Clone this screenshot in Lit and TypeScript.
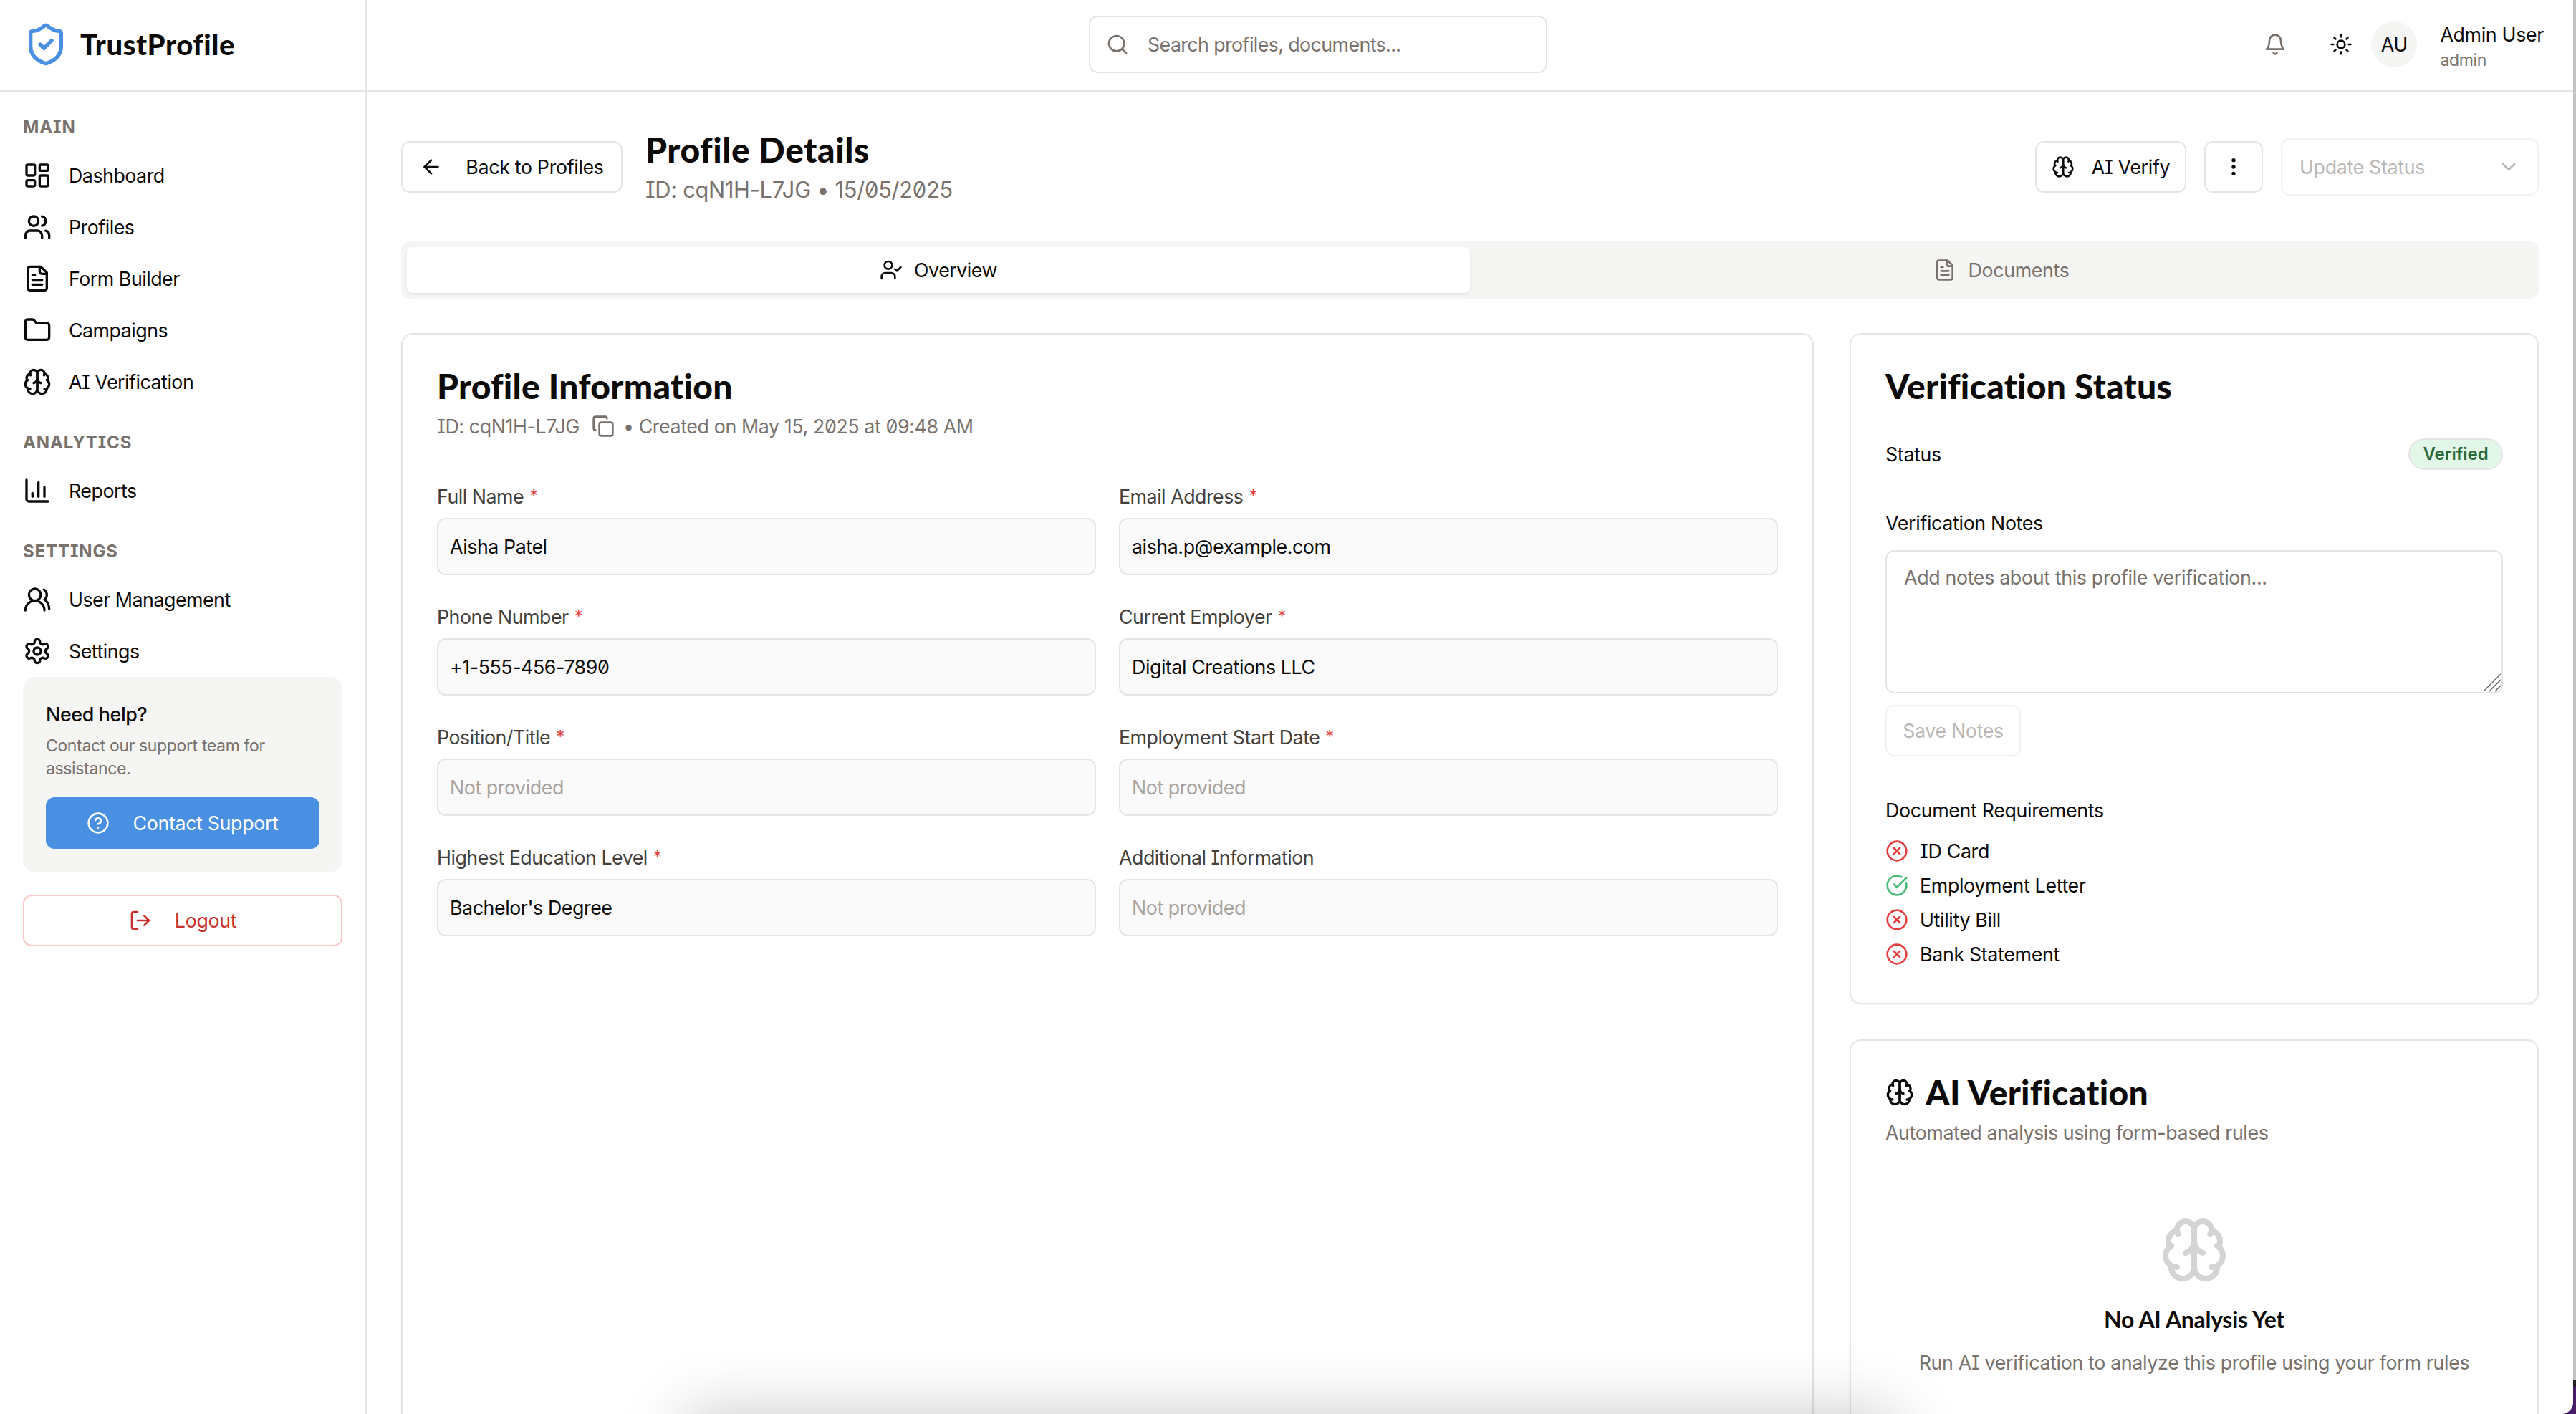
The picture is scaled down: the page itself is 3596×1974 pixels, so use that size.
import { LitElement, html, css, svg, nothing } from "lit";
import { customElement } from "lit/decorators.js";

const P: Record<string, any> = {
  shield: svg`<path d="M20 13c0 5-3.5 7.5-7.66 8.95a1 1 0 0 1-.67-.01C7.5 20.5 4 18 4 13V6a1 1 0 0 1 1-1c2 0 4.5-1.2 6.24-2.72a1.17 1.17 0 0 1 1.52 0C14.51 3.81 17 5 19 5a1 1 0 0 1 1 1z"/><path d="m9 12 2 2 4-4"/>`,
  dash: svg`<rect width="7" height="9" x="3" y="3" rx="1"/><rect width="7" height="5" x="14" y="3" rx="1"/><rect width="7" height="9" x="14" y="12" rx="1"/><rect width="7" height="5" x="3" y="16" rx="1"/>`,
  users: svg`<path d="M16 21v-2a4 4 0 0 0-4-4H6a4 4 0 0 0-4 4v2"/><circle cx="9" cy="7" r="4"/><path d="M22 21v-2a4 4 0 0 0-3-3.87"/><path d="M16 3.13a4 4 0 0 1 0 7.75"/>`,
  file: svg`<path d="M15 2H6a2 2 0 0 0-2 2v16a2 2 0 0 0 2 2h12a2 2 0 0 0 2-2V7Z"/><path d="M14 2v4a2 2 0 0 0 2 2h4"/><path d="M10 9H8"/><path d="M16 13H8"/><path d="M16 17H8"/>`,
  folder: svg`<path d="M20 20a2 2 0 0 0 2-2V8a2 2 0 0 0-2-2h-7.9a2 2 0 0 1-1.69-.9L9.6 3.9A2 2 0 0 0 7.93 3H4a2 2 0 0 0-2 2v13a2 2 0 0 0 2 2Z"/>`,
  brain: svg`<path d="M12 5a3 3 0 1 0-5.997.125 4 4 0 0 0-2.526 5.77 4 4 0 0 0 .556 6.588A4 4 0 1 0 12 18Z"/><path d="M12 5a3 3 0 1 1 5.997.125 4 4 0 0 1 2.526 5.77 4 4 0 0 1-.556 6.588A4 4 0 1 1 12 18Z"/><path d="M15 13a4.5 4.5 0 0 1-3-4 4.5 4.5 0 0 1-3 4"/><path d="M17.599 6.5a3 3 0 0 0 .399-1.375"/><path d="M6.003 5.125A3 3 0 0 0 6.401 6.5"/><path d="M3.477 10.896a4 4 0 0 1 .585-.396"/><path d="M19.938 10.5a4 4 0 0 1 .585.396"/><path d="M6 18a4 4 0 0 1-1.967-.516"/><path d="M19.967 17.484A4 4 0 0 1 18 18"/>`,
  chart: svg`<path d="M3 3v16a2 2 0 0 0 2 2h16"/><path d="M18 17V9"/><path d="M13 17V5"/><path d="M8 17v-3"/>`,
  usersRound: svg`<path d="M18 21a8 8 0 0 0-16 0"/><circle cx="10" cy="8" r="5"/><path d="M22 20c0-3.37-2-6.5-4-8a5 5 0 0 0-.45-8.3"/>`,
  gear: svg`<path d="M12.22 2h-.44a2 2 0 0 0-2 2v.18a2 2 0 0 1-1 1.73l-.43.25a2 2 0 0 1-2 0l-.15-.08a2 2 0 0 0-2.73.73l-.22.38a2 2 0 0 0 .73 2.73l.15.1a2 2 0 0 1 1 1.72v.51a2 2 0 0 1-1 1.74l-.15.09a2 2 0 0 0-.73 2.73l.22.38a2 2 0 0 0 2.73.73l.15-.08a2 2 0 0 1 2 0l.43.25a2 2 0 0 1 1 1.73V20a2 2 0 0 0 2 2h.44a2 2 0 0 0 2-2v-.18a2 2 0 0 1 1-1.73l.43-.25a2 2 0 0 1 2 0l.15.08a2 2 0 0 0 2.73-.73l.22-.39a2 2 0 0 0-.73-2.73l-.15-.08a2 2 0 0 1-1-1.74v-.5a2 2 0 0 1 1-1.74l.15-.09a2 2 0 0 0 .73-2.73l-.22-.38a2 2 0 0 0-2.73-.73l-.15.08a2 2 0 0 1-2 0l-.43-.25a2 2 0 0 1-1-1.73V4a2 2 0 0 0-2-2z"/><circle cx="12" cy="12" r="3"/>`,
  help: svg`<circle cx="12" cy="12" r="10"/><path d="M9.09 9a3 3 0 0 1 5.83 1c0 2-3 3-3 3"/><path d="M12 17h.01"/>`,
  logout: svg`<path d="M9 21H5a2 2 0 0 1-2-2V5a2 2 0 0 1 2-2h4"/><polyline points="16 17 21 12 16 7"/><line x1="21" x2="9" y1="12" y2="12"/>`,
  search: svg`<circle cx="11" cy="11" r="8"/><path d="m21 21-4.3-4.3"/>`,
  bell: svg`<path d="M6 8a6 6 0 0 1 12 0c0 7 3 9 3 9H3s3-2 3-9"/><path d="M10.3 21a1.94 1.94 0 0 0 3.4 0"/>`,
  sun: svg`<circle cx="12" cy="12" r="4"/><path d="M12 2v2"/><path d="M12 20v2"/><path d="m4.93 4.93 1.41 1.41"/><path d="m17.66 17.66 1.41 1.41"/><path d="M2 12h2"/><path d="M20 12h2"/><path d="m6.34 17.66-1.41 1.41"/><path d="m19.07 4.93-1.41 1.41"/>`,
  back: svg`<path d="m12 19-7-7 7-7"/><path d="M19 12H5"/>`,
  more: svg`<circle cx="12" cy="12" r="1"/><circle cx="12" cy="5" r="1"/><circle cx="12" cy="19" r="1"/>`,
  chevron: svg`<path d="m6 9 6 6 6-6"/>`,
  userCheck: svg`<path d="M16 21v-2a4 4 0 0 0-4-4H6a4 4 0 0 0-4 4v2"/><circle cx="9" cy="7" r="4"/><polyline points="16 11 18 13 22 9"/>`,
  copy: svg`<rect width="14" height="14" x="8" y="8" rx="2" ry="2"/><path d="M4 16c-1.1 0-2-.9-2-2V4c0-1.1.9-2 2-2h10c1.1 0 2 .9 2 2"/>`,
  x: svg`<circle cx="12" cy="12" r="10"/><path d="m15 9-6 6"/><path d="m9 9 6 6"/>`,
  ok: svg`<path d="M21.801 10A10 10 0 1 1 17 3.335"/><path d="m9 11 3 3L22 4"/>`,
};

const icon = (name: string, cls = "i16") =>
  html`<svg class="ic ${cls}" viewBox="0 0 24 24" fill="none" stroke="currentColor" stroke-width="2" stroke-linecap="round" stroke-linejoin="round">${P[name]}</svg>`;

const NAV = [
  { title: "MAIN", items: [["dash", "Dashboard"], ["users", "Profiles"], ["file", "Form Builder"], ["folder", "Campaigns"], ["brain", "AI Verification"]] },
  { title: "ANALYTICS", items: [["chart", "Reports"]] },
  { title: "SETTINGS", items: [["usersRound", "User Management"], ["gear", "Settings"]] },
];

const FIELDS = [
  ["Full Name", true, "Aisha Patel"],
  ["Email Address", true, "aisha.p@example.com"],
  ["Phone Number", true, "+1-555-456-7890"],
  ["Current Employer", true, "Digital Creations LLC"],
  ["Position/Title", true, ""],
  ["Employment Start Date", true, ""],
  ["Highest Education Level", true, "Bachelor's Degree"],
  ["Additional Information", false, ""],
] as const;

const DOCS = [
  ["ID Card", false],
  ["Employment Letter", true],
  ["Utility Bill", false],
  ["Bank Statement", false],
] as const;

@customElement("app-root")
export class AppRoot extends LitElement {
  static styles = css`
    :host {
      display: block;
      zoom: 2;
      width: 1798px;
      height: 987px;
      overflow: hidden;
      position: relative;
      background: #c4c4c4;
      font-family: "Inter", "Liberation Sans", sans-serif;
      font-feature-settings: "zero" 1, "cv08" 1;
      font-size: 13.4px;
      letter-spacing: -0.17px;
      line-height: 20px;
      color: #0c0a09;
    }
    * { box-sizing: border-box; }
    .ic { display: block; flex: none; }
    .i16 { width: 16px; height: 16px; }
    .i20 { width: 20px; height: 20px; }
    .i32 { width: 32px; height: 32px; }
    .i48 { width: 48px; height: 48px; stroke-width: 2; }
    .desk {
      position: absolute; right: 0; bottom: 0; width: 10px; height: 23.5px;
      background: #4a1d68; border-top: 4.5px solid #222;
    }
    .shell {
      position: relative; z-index: 1;
      width: 1796px; height: 987px; display: flex;
      background: #fff; border-bottom-right-radius: 8px; overflow: hidden;
    }
    .side { width: 256px; flex: none; border-right: 1px solid #e7e5e4; display: flex; flex-direction: column; }
    .brand {
      height: 64px; flex: none; display: flex; align-items: center; gap: 8px;
      padding: 0 0 1px 16px; border-bottom: 1px solid #e7e5e4;
    }
    .brand .ic { color: #4a90e2; }
    .brand span { font: 900 20px/28px "Lato", sans-serif; letter-spacing: 0.28px; }
    .nav { padding: 16.5px 16px 0; display: flex; flex-direction: column; }
    .sec + .sec { margin-top: 16px; }
    .sec h4 {
      margin: 0 0 7.5px; padding-top: 0.5px; font-size: 12px; line-height: 16px; font-weight: 700;
      color: #78716c; letter-spacing: 0.45px;
    }
    .item { height: 36px; display: flex; align-items: center; gap: 12px; letter-spacing: -0.25px; }
    .help { background: #f5f5f4; border-radius: 8px; padding: 16px; }
    .help b { display: block; font-weight: 500; }
    .help p { margin: 4px 0 12px; font-size: 11.5px; letter-spacing: -0.18px; line-height: 16px; color: #78716c; }
    .btn {
      height: 36px; border-radius: 6px; display: flex; align-items: center; justify-content: center;
      font-weight: 400; white-space: nowrap;
    }
    .primary { background: #4a90e2; color: #fff; gap: 16px; }
    .logout {
      margin-top: 16px; border: 1px solid #f8c9c9; color: #c9302c; gap: 16px; background: #fff;
    }
    .main { flex: 1; min-width: 0; display: flex; flex-direction: column; }
    .top {
      height: 64px; flex: none; display: flex; align-items: center;
      padding: 0 20.5px 1px 504px; border-bottom: 1px solid #e7e5e4;
    }
    .search {
      width: 320px; height: 40px; border: 1px solid #e7e5e4; border-radius: 6px;
      display: flex; align-items: center; gap: 13px; padding-left: 11px; color: #78716c;
      letter-spacing: -0.3px;
    }
    .right { margin-left: auto; display: flex; align-items: center; }
    .tbtn { width: 36px; height: 36px; display: flex; align-items: center; justify-content: center; }
    .bell { color: #78716c; margin-right: 10px; }
    .avatar {
      width: 32px; height: 32px; border-radius: 50%; background: #f5f5f4; margin-left: 3px;
      display: flex; align-items: center; justify-content: center;
    }
    .who { margin-left: 16px; margin-top: 3.5px; }
    .who b { display: block; font-weight: 400; line-height: 18px; }
    .who span { display: block; font-size: 11.5px; line-height: 18px; color: #78716c; }
    .content { padding: 24px 24px 0; flex: 1; min-height: 0; }
    .titlebar { height: 56.5px; display: flex; align-items: center; }
    .out { border: 1px solid #e7e5e4; background: #fff; }
    .backb { width: 154.5px; gap: 16px; margin-right: 16px; }
    .ttl h1 { margin: 0; font: 900 24px/32px "Lato", sans-serif; letter-spacing: 0.3px; }
    .ttl p { margin: 0; font-size: 15.4px; letter-spacing: -0.15px; line-height: 24px; color: #78716c; }
    .actions { margin-left: auto; display: flex; align-items: center; gap: 12.5px; }
    .aib { width: 105.5px; gap: 12px; }
    .kebab { width: 41px; }
    .select {
      width: 180px; height: 40px; border: 1px solid #e7e5e4; border-radius: 6px; opacity: .5;
      display: flex; align-items: center; justify-content: space-between; padding: 0 12px; color: #78716c;
    }
    .tabs {
      margin-top: 24px; height: 40px; background: #f5f5f4; border-radius: 6px; padding: 4px;
      display: grid; grid-template-columns: 1fr 1fr;
    }
    .tab { display: flex; align-items: center; justify-content: center; gap: 8px; border-radius: 4px; color: #78716c; }
    .tab.on { background: #fff; color: #0c0a09; box-shadow: 0 1px 2px rgba(0,0,0,.08); letter-spacing: -0.25px; }
    .cols { margin-top: 24px; display: grid; grid-template-columns: 1fr 481px; gap: 25px; align-items: start; }
    .card { border: 1px solid #e7e5e4; border-radius: 8px; padding: 24px; background: #fff; box-shadow: 0 1px 2px rgba(0,0,0,.04); }
    .card h2 { margin: 0; font: 900 24px/24px "Lato", sans-serif; letter-spacing: 0.14px; display: flex; align-items: center; gap: 8px; }
    .tall { height: 1200px; }
    .sub { margin: 6px 0 0; color: #78716c; display: flex; align-items: center; letter-spacing: -0.2px; }
    .copy { margin: 0 6px 0 8.5px; }
    .grid { margin-top: 29px; display: grid; grid-template-columns: 1fr 1fr; column-gap: 16px; row-gap: 19px; }
    .lab { display: flex; align-items: center; height: 20px; color: #44403c; margin-bottom: 5px; letter-spacing: -0.25px; }
    .lab i { font-style: normal; color: #e53e3e; margin-left: 4px; font-size: 12px; }
    .val {
      height: 40px; border: 1px solid #e7e5e4; border-radius: 6px; background: #fafafa;
      display: flex; align-items: center; padding: 0 8px; letter-spacing: -0.22px;
    }
    .val.empty { color: #a8a29e; }
    .stack { display: flex; flex-direction: column; gap: 24.5px; }
    .row { margin-top: 24.5px; display: flex; align-items: center; justify-content: space-between; }
    .badge {
      height: 22px; width: 66px; border-radius: 11px; border: 1px solid #e7e5e4; background: #e3f7e8;
      color: #276738; font-size: 12px; letter-spacing: 0; font-weight: 600; display: flex; align-items: center; justify-content: center;
    }
    .notes { display: block; margin-top: 27px; }
    .area { position: relative; margin-top: 9px; }
    textarea {
      display: block; width: 100%; height: 100px; padding: 8px 12px; resize: none;
      border: 1px solid #e7e5e4; border-radius: 6px; outline: none; background: #fff;
      font: inherit; font-feature-settings: inherit; letter-spacing: inherit; color: inherit;
    }
    textarea::placeholder { color: #78716c; opacity: 1; }
    .grip { position: absolute; right: 1px; bottom: 1px; width: 13px; height: 13px; color: #5c5c5c; }
    .save { width: 94.5px; margin-top: 8px; opacity: .5; color: #78716c; }
    .req { margin-top: 27.5px; }
    .docs { margin-top: 8.5px; display: flex; flex-direction: column; gap: 4px; }
    .doc { display: flex; align-items: center; gap: 8px; }
    .no { color: #e53e3e; }
    .yes { color: #48bb78; }
    .ai { padding-bottom: 40px; }
    .ai h2 .ic { width: 20px; height: 20px; stroke-width: 2; }
    .ai .desc { margin: 6px 0 0; color: #78716c; letter-spacing: -0.2px; }
    .empty-ai { margin-top: 48px; display: flex; flex-direction: column; align-items: center; text-align: center; }
    .empty-ai .ic { color: #d4d4d4; }
    .empty-ai h3 { margin: 12.6px 0 0; font: 700 16px/24px "Lato", sans-serif; letter-spacing: -0.15px; }
    .empty-ai p { margin: 8px 0 0; color: #78716c; }
    .glow {
      position: absolute; z-index: 2; left: 478px; width: 845px; top: 987px; height: 60px;
      box-shadow: 0 0 45px rgba(0,0,0,.22); pointer-events: none;
    }
  `;

  render() {
    return html`
      <div class="desk"></div>
      <div class="shell">
        <aside class="side">
          <div class="brand">${icon("shield", "i32")}<span>TrustProfile</span></div>
          <nav class="nav">
            ${NAV.map(
              (s) => html`<div class="sec">
                <h4>${s.title}</h4>
                ${s.items.map(([ic, t]) => html`<div class="item">${icon(ic, "i20")}<span>${t}</span></div>`)}
              </div>`
            )}
            <div class="help">
              <b>Need help?</b>
              <p>Contact our support team for assistance.</p>
              <div class="btn primary">${icon("help")}<span>Contact Support</span></div>
            </div>
            <div class="btn logout">${icon("logout")}<span>Logout</span></div>
          </nav>
        </aside>
        <div class="main">
          <header class="top">
            <div class="search">${icon("search")}<span>Search profiles, documents...</span></div>
            <div class="right">
              <div class="tbtn bell">${icon("bell")}</div>
              <div class="tbtn">${icon("sun")}</div>
              <div class="avatar">AU</div>
              <div class="who"><b>Admin User</b><span>admin</span></div>
            </div>
          </header>
          <div class="content">
            <div class="titlebar">
              <div class="btn out backb">${icon("back")}<span>Back to Profiles</span></div>
              <div class="ttl">
                <h1>Profile Details</h1>
                <p>ID: cqN1H-L7JG • 15/05/2025</p>
              </div>
              <div class="actions">
                <div class="btn out aib">${icon("brain")}<span>AI Verify</span></div>
                <div class="btn out kebab">${icon("more")}</div>
                <div class="select"><span>Update Status</span>${icon("chevron")}</div>
              </div>
            </div>
            <div class="tabs">
              <div class="tab on">${icon("userCheck")}<span>Overview</span></div>
              <div class="tab">${icon("file")}<span>Documents</span></div>
            </div>
            <div class="cols">
              <section class="card tall">
                <h2>Profile Information</h2>
                <div class="sub">
                  <span>ID: cqN1H-L7JG</span>
                  <span class="copy">${icon("copy")}</span>
                  <span>• Created on May 15, 2025 at 09:48 AM</span>
                </div>
                <div class="grid">
                  ${FIELDS.map(
                    ([l, req, v]) => html`<div>
                      <span class="lab">${l}${req ? html`<i>*</i>` : nothing}</span>
                      <div class="val ${v ? "" : "empty"}">${v || "Not provided"}</div>
                    </div>`
                  )}
                </div>
              </section>
              <div class="stack">
                <section class="card">
                  <h2>Verification Status</h2>
                  <div class="row"><span>Status</span><span class="badge">Verified</span></div>
                  <label class="notes">Verification Notes
                    <div class="area">
                      <textarea placeholder="Add notes about this profile verification..."></textarea>
                      <svg class="grip" viewBox="0 0 13 13" fill="none" stroke="currentColor" stroke-width="0.7">
                        <path d="M0.5 12.5 12.5 0.5M4.5 12.5l8-8M8.5 12.5l4-4"/>
                      </svg>
                    </div>
                  </label>
                  <div class="btn out save">Save Notes</div>
                  <div class="req">Document Requirements</div>
                  <div class="docs">
                    ${DOCS.map(
                      ([t, ok]) => html`<div class="doc">
                        <span class=${ok ? "yes" : "no"}>${icon(ok ? "ok" : "x")}</span><span>${t}</span>
                      </div>`
                    )}
                  </div>
                </section>
                <section class="card ai">
                  <h2>${icon("brain")}<span>AI Verification</span></h2>
                  <p class="desc">Automated analysis using form-based rules</p>
                  <div class="empty-ai">
                    ${icon("brain", "i48")}
                    <h3>No AI Analysis Yet</h3>
                    <p>Run AI verification to analyze this profile using your form rules</p>
                  </div>
                </section>
              </div>
            </div>
          </div>
        </div>
      </div>
      <div class="glow"></div>
    `;
  }
}
